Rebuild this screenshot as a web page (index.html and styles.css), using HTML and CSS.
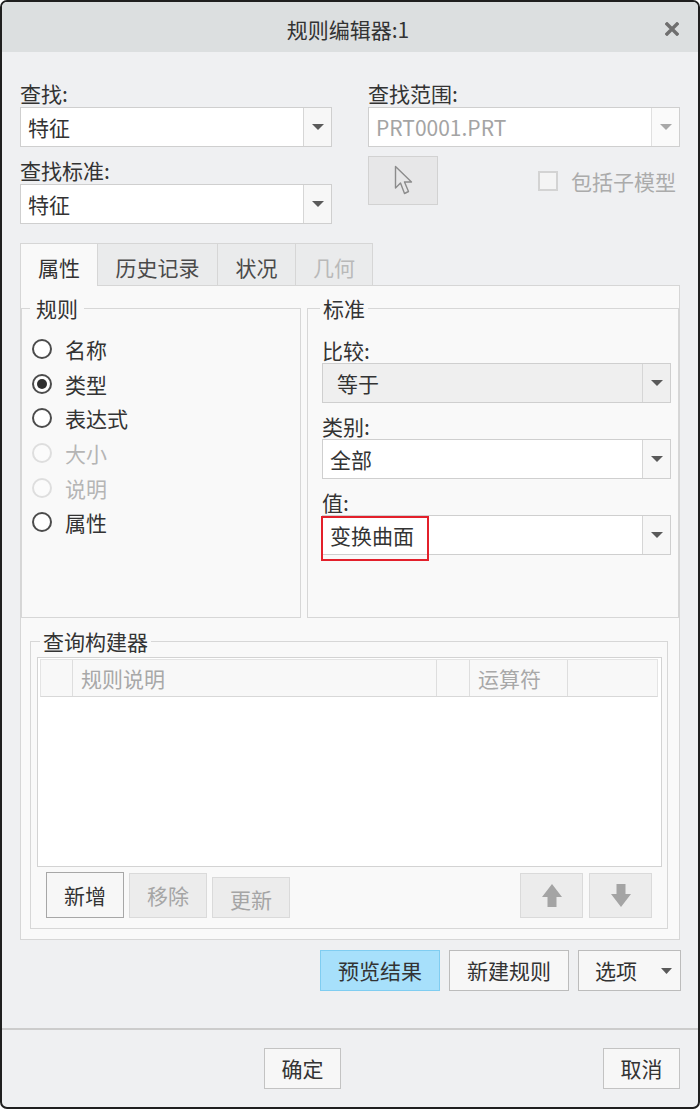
FILE: index.html
```html
<!DOCTYPE html>
<html lang="zh-CN">
<head>
<meta charset="utf-8">
<title>规则编辑器:1</title>
<link rel="stylesheet" href="styles.css">
</head>
<body>
<div class="window">
  <header class="titlebar">
    <span></span>
    <span class="title">规则编辑器:1</span>
    <svg class="close" width="14" height="14" viewBox="0 0 14 14"><path d="M2 2 L12 12 M12 2 L2 12" stroke="#6f6f6f" stroke-width="3.4" stroke-linecap="square"/></svg>
  </header>

  <main class="body">
    <section class="find-row">
      <div class="col">
        <div class="lbl">查找:</div>
        <div class="combo"><span class="val">特征</span><span class="drop"><svg width="12" height="6" viewBox="0 0 12 6"><path d="M0 0 H12 L6 6 Z" fill="#5a5a5a"/></svg></span></div>
        <div class="lbl lbl-gap">查找标准:</div>
        <div class="combo"><span class="val">特征</span><span class="drop"><svg width="12" height="6" viewBox="0 0 12 6"><path d="M0 0 H12 L6 6 Z" fill="#5a5a5a"/></svg></span></div>
      </div>
      <div class="col">
        <div class="lbl">查找范围:</div>
        <div class="combo disabled"><span class="val">PRT0001.PRT</span><span class="drop"><svg width="12" height="6" viewBox="0 0 12 6"><path d="M0 0 H12 L6 6 Z" fill="#a8a8a8"/></svg></span></div>
        <div class="pick-row">
          <button class="pick"><svg width="19" height="31" viewBox="0 0 19 31"><path d="M1.5 1.5 V23 L6.5 18 L10.5 28.5 L14.5 26.5 L10.5 17 H17.5 Z" fill="none" stroke="#8c8c8c" stroke-width="1.4" stroke-linejoin="round"/></svg></button>
          <label class="check"><span class="box"></span>包括子模型</label>
        </div>
      </div>
    </section>

    <nav class="tabs">
      <span class="tab active">属性</span>
      <span class="tab">历史记录</span>
      <span class="tab">状况</span>
      <span class="tab off">几何</span>
    </nav>

    <section class="panel">
      <div class="groups">
        <fieldset class="rules">
          <legend>规则</legend>
          <div class="radio"><span class="dot"></span>名称</div>
          <div class="radio on"><span class="dot"></span>类型</div>
          <div class="radio"><span class="dot"></span>表达式</div>
          <div class="radio off"><span class="dot"></span>大小</div>
          <div class="radio off"><span class="dot"></span>说明</div>
          <div class="radio"><span class="dot"></span>属性</div>
        </fieldset>
        <fieldset class="criteria">
          <legend>标准</legend>
          <div class="lbl2">比较:</div>
          <div class="combo grey"><span class="val">等于</span><span class="drop"><svg width="12" height="6" viewBox="0 0 12 6"><path d="M0 0 H12 L6 6 Z" fill="#5a5a5a"/></svg></span></div>
          <div class="lbl2 gap">类别:</div>
          <div class="combo"><span class="val">全部</span><span class="drop"><svg width="12" height="6" viewBox="0 0 12 6"><path d="M0 0 H12 L6 6 Z" fill="#5a5a5a"/></svg></span></div>
          <div class="lbl2 gap">值:</div>
          <div class="combo marked"><span class="val">变换曲面</span><span class="drop"><svg width="12" height="6" viewBox="0 0 12 6"><path d="M0 0 H12 L6 6 Z" fill="#5a5a5a"/></svg></span><span class="highlight"></span></div>
        </fieldset>
      </div>

      <fieldset class="query">
        <legend>查询构建器</legend>
        <div class="table">
          <div class="thead">
            <span class="th c1"></span>
            <span class="th c2">规则说明</span>
            <span class="th c3"></span>
            <span class="th c4">运算符</span>
            <span class="th c5"></span>
          </div>
        </div>
        <div class="qbtns">
          <button class="btn add">新增</button>
          <button class="btn dis rm">移除</button>
          <button class="btn dis upd">更新</button>
          <span class="spacer"></span>
          <button class="btn dis arrow"><svg width="22" height="23" viewBox="0 0 22 23"><path d="M11 0 L21 13 H15.5 V23 H6.5 V13 H1 Z" fill="#a4a4a4"/></svg></button>
          <button class="btn dis arrow"><svg width="22" height="23" viewBox="0 0 22 23"><path d="M11 23 L21 10 H15.5 V0 H6.5 V10 H1 Z" fill="#a4a4a4"/></svg></button>
        </div>
      </fieldset>
    </section>

    <div class="actions">
      <button class="btn big preview">预览结果</button>
      <button class="btn big">新建规则</button>
      <button class="btn big opts"><span>选项</span><svg width="11" height="6" viewBox="0 0 11 6"><path d="M0 0 H11 L5.5 6 Z" fill="#5a5a5a"/></svg></button>
    </div>
  </main>

  <footer class="footer">
    <span class="fill"></span>
    <button class="btn foot">确定</button>
    <span class="fill"></span>
    <button class="btn foot">取消</button>
  </footer>
</div>
</body>
</html>
```

FILE: styles.css
```css
* { box-sizing: border-box; }

html, body {
  margin: 0;
  padding: 0;
  background: #ffffff;
}

body {
  font-family: "Noto Sans CJK SC", "Noto Sans", sans-serif;
  font-size: 21px;
  color: #333333;
}

.window {
  width: 700px;
  height: 1109px;
  border: 2px solid #1f1f1f;
  border-radius: 7px;
  background: #eff0f2;
  overflow: hidden;
  display: flex;
  flex-direction: column;
}

/* title bar */
.titlebar {
  height: 50px;
  background: #dcdfe0;
  display: grid;
  grid-template-columns: 1fr auto 1fr;
  align-items: center;
}
.title {
  font-size: 21px;
  line-height: 50px;
  padding-top: 2px;
  color: #333;
  margin-right: 4px;
}
.close {
  justify-self: end;
  margin-right: 19px;
  margin-top: 2px;
}

/* body */
.body {
  padding: 28px 18px 0 18px;
}

.find-row {
  display: flex;
  gap: 36px;
}
.col {
  width: 312px;
  display: flex;
  flex-direction: column;
}
.lbl {
  height: 27px;
  line-height: 27px;
  color: #333;
}
.lbl-gap { margin-top: 10px; }

.combo {
  position: relative;
  height: 40px;
  border: 1px solid #cfcfcf;
  background: #ffffff;
  display: flex;
  align-items: stretch;
}
.combo .val {
  flex: 1;
  padding-left: 7px;
  line-height: 38px;
  color: #333;
  white-space: nowrap;
}
.combo .drop {
  width: 28px;
  border-left: 1px solid #d6d6d6;
  background: #f7f7f7;
  display: flex;
  align-items: center;
  justify-content: center;
}
.combo.disabled .val { color: #a4a4a4; }
.combo.disabled .drop { background: #fafafa; border-left-color: #e0e0e0; }
.combo.grey { background: #efefef; }
.combo.grey .val { padding-left: 14px; }
.combo.grey .drop { background: #efefef; }

.highlight {
  position: absolute;
  left: -2px;
  top: 0px;
  width: 108px;
  height: 45px;
  border: 2px solid #e3202b;
  pointer-events: none;
}

.pick-row {
  margin-top: 9px;
  display: flex;
  align-items: center;
}
.pick {
  width: 70px;
  height: 49px;
  border: 1px solid #d2d2d2;
  background: #e7e7e8;
  padding: 0;
  display: flex;
  align-items: center;
  justify-content: center;
}
.check {
  margin-left: 100px;
  display: flex;
  align-items: center;
  color: #ababab;
  line-height: 27px;
  padding-top: 2px;
}
.check .box {
  width: 20px;
  height: 20px;
  border: 2px solid #d3d3d3;
  background: #f4f4f4;
  margin-right: 13px;
  margin-top: -2px;
}

/* tabs */
.tabs {
  margin-top: 19px;
  display: flex;
  position: relative;
  z-index: 1;
}
.tab {
  height: 42px;
  line-height: 42px;
  padding-top: 2px;
  text-align: center;
  border: 1px solid #d6d6d6;
  border-bottom: none;
  background: #eaebec;
  color: #4a4a4a;
  margin-left: -1px;
}
.tab:nth-child(1) { width: 78px; margin-left: 0; }
.tab:nth-child(2) { width: 121px; }
.tab:nth-child(3) { width: 79px; }
.tab:nth-child(4) { width: 78px; }
.tab.active {
  background: #f9f9f9;
  height: 43px;
  margin-bottom: -1px;
  color: #333;
}
.tab.off { color: #b9b9b9; }

/* panel */
.panel {
  height: 655px;
  border: 1px solid #d6d6d6;
  background: #f9f9f9;
  padding: 10px 0 10px 0;
}

fieldset {
  margin: 0;
  min-width: 0;
  border: 1px solid #d7d7d7;
}
legend {
  font-size: 21px;
  line-height: 24px;
  padding: 0 5px;
  color: #333;
}

.groups {
  display: flex;
  gap: 6px;
  height: 322px;
}
.rules {
  width: 280px;
  padding: 12px 0 0 10px;
}
.rules legend { margin-left: -2px; padding: 0 6px; }

.radio {
  height: 34.6px;
  display: flex;
  align-items: center;
  color: #333;
}
.radio .dot {
  width: 20px;
  height: 20px;
  border: 2px solid #4c4c4c;
  border-radius: 50%;
  background: #ffffff;
  margin-right: 13px;
  display: flex;
  align-items: center;
  justify-content: center;
}
.radio.on .dot::after {
  content: "";
  width: 10px;
  height: 10px;
  border-radius: 50%;
  background: #2f2f2f;
}
.radio.off { color: #b5b5b5; }
.radio.off .dot { border-color: #dedede; background: #fbfbfb; }

.criteria {
  flex: 1;
  padding: 18px 7px 0 14px;
}
.criteria legend { margin-left: -2px; padding: 0 3px; }
.lbl2 {
  height: 25px;
  line-height: 25px;
  color: #333;
}
.lbl2.gap { margin-top: 11px; }

.query {
  margin: 11px 11px 0 9px;
  height: 300px;
  padding: 4px 5px 10px 6px;
}
.query legend { margin-left: 3px; padding: 0 3px; }

.table {
  height: 210px;
  border: 1px solid #d3d3d3;
  background: #ffffff;
  padding: 1px 3px 0 2px;
}
.thead {
  display: flex;
  height: 38px;
  background: #f8f8f8;
  border: 1px solid #e4e4e4;
  border-bottom: 1px solid #d8d8d8;
}
.th {
  border-right: 1px solid #dedede;
  color: #a8a8a8;
  line-height: 36px;
  padding-left: 8px;
  white-space: nowrap;
}
.th.c1 { width: 32px; }
.th.c2 { width: 364px; }
.th.c3 { width: 33px; }
.th.c4 { width: 98px; }
.th.c5 { flex: 1; border-right: none; }

.qbtns {
  margin-top: 5px;
  display: flex;
  align-items: flex-end;
  gap: 5px;
  padding: 0 10px 0 9px;
}
.spacer { flex: 1; }

.btn {
  font-family: inherit;
  font-size: 21px;
  color: #333;
  background: #f7f7f7;
  border: 1px solid #bcbcbc;
  padding: 0;
  margin: 0;
  line-height: 1;
}
.btn.add { width: 78px; height: 46px; border-color: #a7a7a7; }
.btn.dis { background: #ececec; border-color: #dadada; color: #a5a5a5; }
.btn.rm { width: 78px; height: 45px; }
.btn.upd { width: 78px; height: 41px; padding-top: 4px; }
.btn.arrow {
  width: 63px;
  height: 45px;
  display: flex;
  align-items: center;
  justify-content: center;
}
.btn.arrow + .btn.arrow { margin-left: 1px; }

/* bottom actions */
.actions {
  margin-top: 10px;
  margin-right: -1px;
  display: flex;
  justify-content: flex-end;
  gap: 9px;
}
.btn.big { width: 120px; height: 41px; }
.btn.preview { background: #a7e0fb; border-color: #7fcdf1; }
.btn.opts {
  width: 103px;
  display: flex;
  align-items: center;
  padding: 0 8px 0 16px;
  justify-content: space-between;
}

.footer {
  margin-top: 37px;
  border-top: 2px solid #cccccc;
  padding: 18px 18px 0 0;
  display: flex;
}
.fill { flex: 1; }
.btn.foot { width: 77px; height: 41px; border-color: #c3c3c3; }
```
